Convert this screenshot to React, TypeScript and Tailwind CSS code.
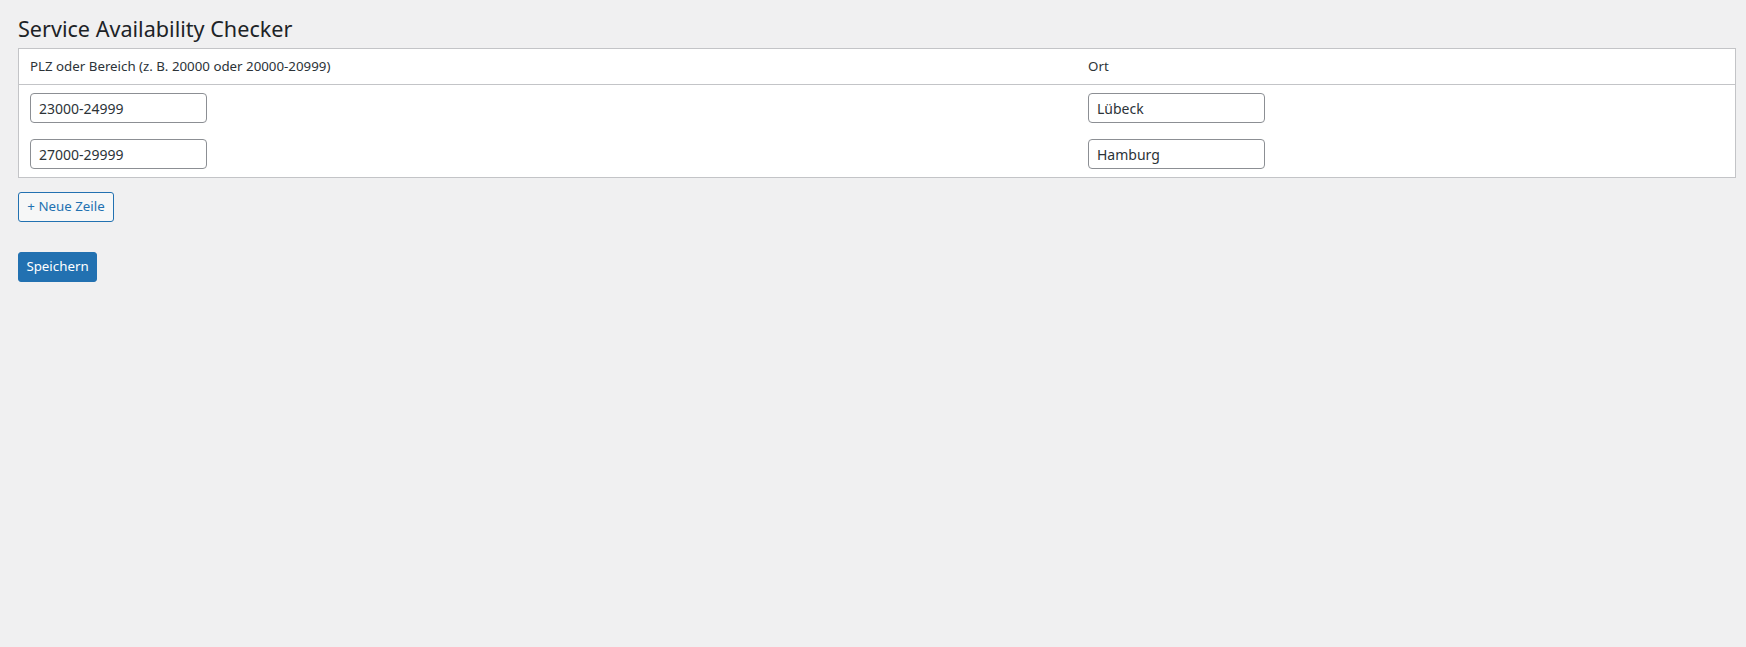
import { useState } from 'react';

type Row = { plz: string; ort: string };

export default function App() {
  const [rows, setRows] = useState<Row[]>([
    { plz: '23000-24999', ort: 'Lübeck' },
    { plz: '27000-29999', ort: 'Hamburg' },
  ]);

  const update = (i: number, key: keyof Row, value: string) => {
    setRows((prev) => prev.map((r, idx) => (idx === i ? { ...r, [key]: value } : r)));
  };

  return (
    <div className="min-h-screen bg-[#f0f0f1] pl-[18px] pr-[10px] pt-[14px] font-['Noto_Sans',sans-serif] text-[#2c3338]">
      {/* Title */}
      <h1 className="text-[21.6px] leading-[30px] text-[#1d2327] font-normal mb-[4px]">
        Service Availability Checker
      </h1>

      {/* Zones table */}
      <div className="border border-[#c3c4c7] bg-white">
        <div className="grid grid-cols-[1058px_1fr] border-b border-[#c3c4c7] h-[36px] items-center text-[13.3px]">
          <div className="pl-[11px]">PLZ oder Bereich (z. B. 20000 oder 20000-20999)</div>
          <div className="pl-[11px]">Ort</div>
        </div>
        {rows.map((row, i) => (
          <div key={i} className="grid grid-cols-[1058px_1fr] h-[46px] items-center">
            <div className="pl-[11px]">
              <input
                value={row.plz}
                onChange={(e) => update(i, 'plz', e.target.value)}
                className="w-[177px] h-[30px] rounded-[4px] border border-[#8c8f94] bg-white px-[8px] text-[14px] text-[#2c3338] outline-none"
              />
            </div>
            <div className="pl-[11px]">
              <input
                value={row.ort}
                onChange={(e) => update(i, 'ort', e.target.value)}
                className="w-[177px] h-[30px] rounded-[4px] border border-[#8c8f94] bg-white px-[8px] text-[14px] text-[#2c3338] outline-none"
              />
            </div>
          </div>
        ))}
      </div>

      {/* Actions */}
      <button
        type="button"
        onClick={() => setRows((prev) => [...prev, { plz: '', ort: '' }])}
        className="mt-[14px] w-[96px] h-[30px] rounded-[3px] border border-[#2271b1] bg-[#f6f7f7] text-[#2271b1] text-[13.3px] leading-none"
      >
        + Neue Zeile
      </button>

      <div className="mt-[30px]">
        <button
          type="button"
          className="w-[79px] h-[30px] rounded-[3px] border border-[#2271b1] bg-[#2271b1] text-white text-[13.3px] leading-none"
        >
          Speichern
        </button>
      </div>
    </div>
  );
}
